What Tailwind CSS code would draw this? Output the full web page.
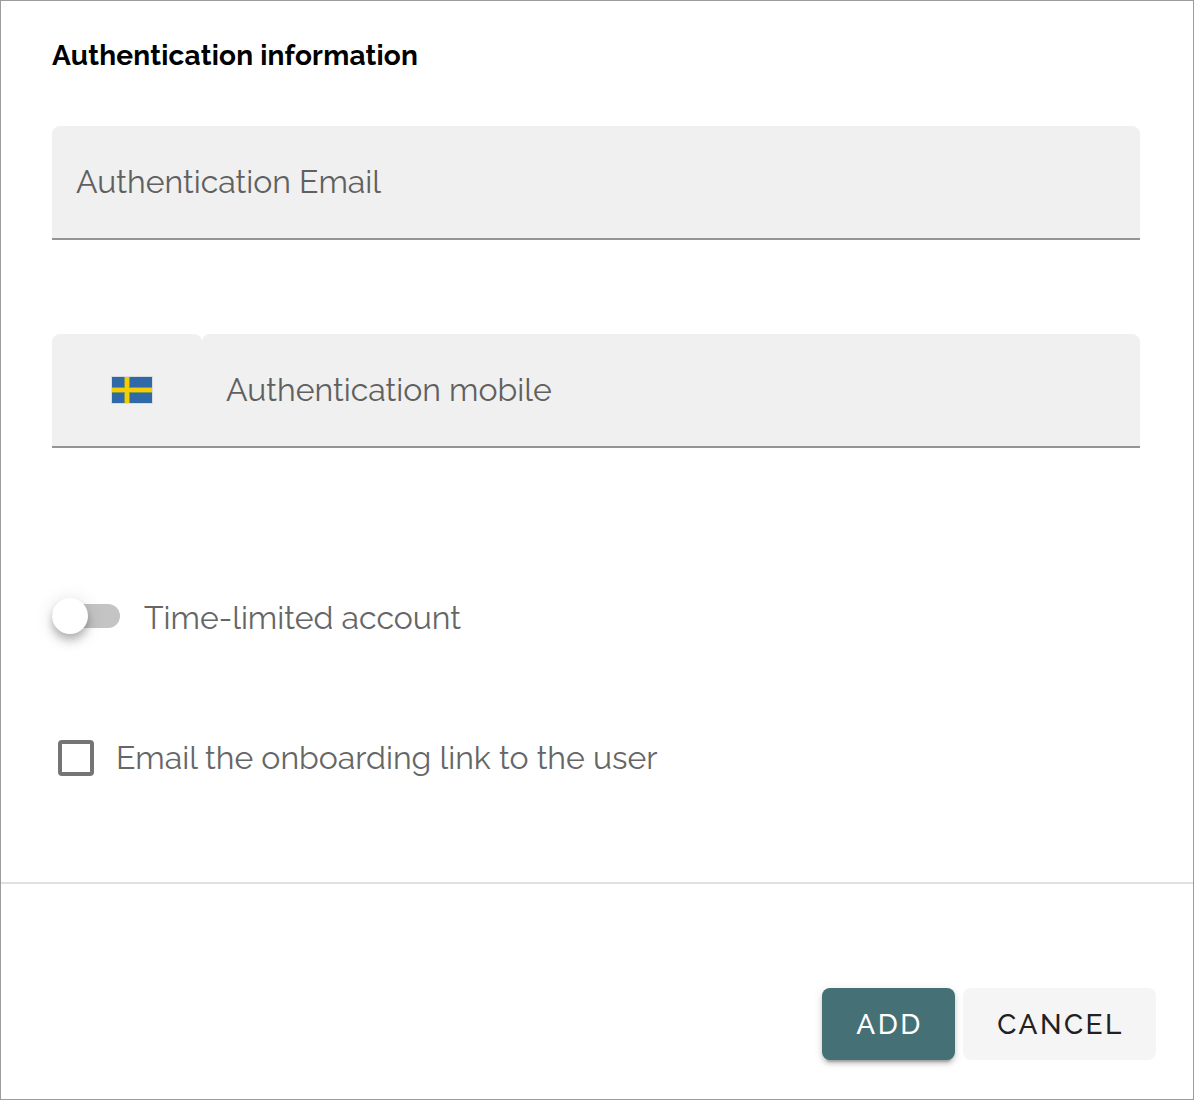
<!DOCTYPE html>
<html lang="en">
<head>
<meta charset="utf-8">
<title>Authentication information</title>
<script src="https://cdn.jsdelivr.net/npm/@tailwindcss/browser@4"></script>
</head>
<body class="bg-white">
<main class="flex h-[1100px] w-[1194px] flex-col border border-[#9c9c9c] font-[Raleway,Lato,sans-serif]">
  <form class="flex h-[881px] flex-col px-[51px] pt-[35px]">
    <h1 class="h-10 whitespace-nowrap text-[28px]/10 font-bold tracking-[0.2px] text-black"><span>Authentication information</span></h1>
    <div class="mt-[50px] flex h-[114px] w-[1088px] items-center rounded-t-lg border-b-2 border-[#949494] bg-[#f0f0f0] px-6 text-[32px]/10 font-normal text-[#606060]">
      <span class="whitespace-nowrap">Authentication Email</span>
    </div>
    <div class="mt-[94px] flex h-[114px] w-[1088px] text-[32px]/10 font-normal text-[#606060]">
      <div class="flex w-[150px] items-center rounded-t-lg border-b-2 border-[#949494] bg-[#f0f0f0] pl-[59px]">
        <svg class="h-[28px] w-[42px]" viewBox="0 0 42 28">
          <rect width="42" height="28" rx="1" fill="#d7dade"/>
          <path fill="#2f69a8" d="M1 1h40v26H1z"/>
          <path fill="#7f9c4e" d="M13 1h6v26h-6zM1 11h40v6H1z"/>
          <path fill="#f8cc05" d="M14 1h4v26h-4zM1 12h40v4H1z"/>
        </svg>
      </div>
      <div class="flex flex-1 items-center rounded-t-lg border-b-2 border-[#949494] bg-[#f0f0f0] px-6">
        <span class="whitespace-nowrap">Authentication mobile</span>
      </div>
    </div>
    <label class="mt-[148px] flex h-10 items-center text-[32px]/10 font-normal text-[#666]">
      <span class="flex h-6 w-[68px] items-center rounded-full bg-[#c4c4c4]">
        <span class="size-9 rounded-full bg-white shadow-[0_4px_8px_-2px_rgba(0,0,0,0.2),0_8px_10px_rgba(0,0,0,0.14),0_2px_20px_rgba(0,0,0,0.12)]"></span>
      </span>
      <span class="ml-6 whitespace-nowrap pt-1">Time-limited account</span>
    </label>
    <label class="mt-[102px] flex h-10 items-center pl-1.5 text-[32px]/10 font-normal text-[#666]">
      <span class="size-9 rounded-[4px] border-4 border-[#757575]"></span>
      <span class="ml-[22px] whitespace-nowrap">Email the onboarding link to the user</span>
    </label>
  </form>
  <footer class="flex flex-1 items-start justify-end gap-2 border-t-2 border-[#e0e0e0] pt-[104px] pr-[37px] text-[28px] font-medium tracking-[2.5px]">
    <button class="h-[72px] w-[133px] rounded-lg bg-[#457076] pt-0.5 pl-0.5 text-white shadow-[0_6px_2px_-4px_rgba(0,0,0,0.2),0_4px_4px_rgba(0,0,0,0.14),0_2px_10px_rgba(0,0,0,0.12)]"><span class="uppercase">Add</span></button>
    <button class="h-[72px] w-[193px] rounded-lg bg-[#f5f5f5] pt-0.5 pl-0.5 text-[#212121]"><span class="uppercase">Cancel</span></button>
  </footer>
</main>
</body>
</html>
